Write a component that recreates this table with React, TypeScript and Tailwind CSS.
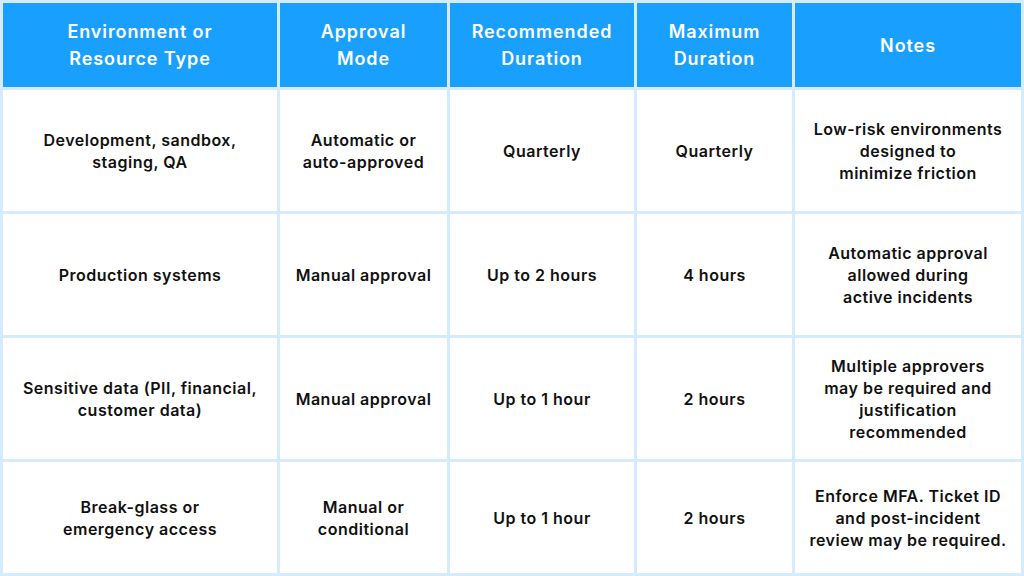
const headers = [
  ['Environment or', 'Resource Type'],
  ['Approval', 'Mode'],
  ['Recommended', 'Duration'],
  ['Maximum', 'Duration'],
  ['Notes'],
]

const rows: string[][][] = [
  [
    ['Development, sandbox,', 'staging, QA'],
    ['Automatic or', 'auto-approved'],
    ['Quarterly'],
    ['Quarterly'],
    ['Low-risk environments', 'designed to', 'minimize friction'],
  ],
  [
    ['Production systems'],
    ['Manual approval'],
    ['Up to 2 hours'],
    ['4 hours'],
    ['Automatic approval', 'allowed during', 'active incidents'],
  ],
  [
    ['Sensitive data (PII, financial,', 'customer data)'],
    ['Manual approval'],
    ['Up to 1 hour'],
    ['2 hours'],
    ['Multiple approvers', 'may be required and', 'justification', 'recommended'],
  ],
  [
    ['Break-glass or', 'emergency access'],
    ['Manual or', 'conditional'],
    ['Up to 1 hour'],
    ['2 hours'],
    ['Enforce MFA. Ticket ID', 'and post-incident', 'review may be required.'],
  ],
]

export default function App() {
  return (
    <div
      className="w-[1024px] h-[576px] bg-[#d5ebff] p-[3px] grid gap-[3px] grid-cols-[274px_167px_184px_155px_226px] grid-rows-[84px_121px_121px_121px_111px]"
      style={{ fontFamily: 'Inter, "Noto Sans", sans-serif' }}
    >
      {headers.map((h, i) => (
        <div
          key={i}
          className="bg-[#199ffe] text-white flex flex-col items-center justify-center text-center text-[18px] tracking-[0.9px] font-semibold leading-[27px]"
        >
          {h.map((l, j) => (
            <span key={j}>{l}</span>
          ))}
        </div>
      ))}
      {rows.map((r, ri) =>
        r.map((c, ci) => (
          <div
            key={ri + '-' + ci}
            className="bg-white text-[#111] flex flex-col items-center justify-center text-center text-[16px] tracking-[0.5px] font-semibold leading-[22px]"
          >
            {c.map((l, j) => (
              <span key={j} className="whitespace-nowrap">{l}</span>
            ))}
          </div>
        ))
      )}
    </div>
  )
}
